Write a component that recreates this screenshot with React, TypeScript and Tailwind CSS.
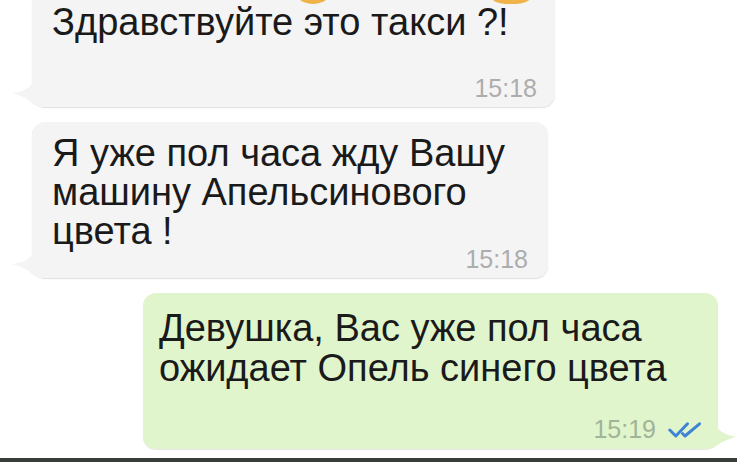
import React from "react";

const GrayTail = () => (
  <svg
    className="absolute left-[-21px] bottom-0"
    width="32"
    height="30"
    viewBox="0 0 32 30"
  >
    <path
      d="M22 4 C 20 11, 12 15, 1 16 C 9 18, 16 21, 21 26 C 23 28, 26 30, 32 30 L 32 4 Z"
      fill="#f4f4f4"
    />
  </svg>
);

const GreenTail = () => (
  <svg
    className="absolute right-[-19px] bottom-0"
    width="32"
    height="28"
    viewBox="0 0 32 28"
  >
    <path
      d="M10 2 C 12 9, 20 14, 31 16 C 23 18, 16 21, 11 25 C 9 27, 6 28, 0 28 L 0 2 Z"
      fill="#e1f5cc"
    />
  </svg>
);

const Checks = () => (
  <svg width="34" height="16" viewBox="0 0 34 16" className="ml-[12px] mb-[4px]">
    <path
      d="M1.8 8 L7.8 14 L19.5 1.8"
      fill="none"
      stroke="#3f84d4"
      strokeWidth="3"
      strokeLinecap="round"
      strokeLinejoin="round"
    />
    <path
      d="M14.5 11.5 L17 14 L31.5 1.8"
      fill="none"
      stroke="#3f84d4"
      strokeWidth="3"
      strokeLinecap="round"
      strokeLinejoin="round"
    />
  </svg>
);

export default function App() {
  return (
    <div className="w-[737px] h-[462px] bg-white overflow-hidden flex flex-col font-['Liberation_Sans',Arial,sans-serif] text-[#1a1a1a]">
      <div className="flex flex-col gap-[15px]">
        {/* Bubble 1 */}
        <div className="relative ml-[32px] w-[523px] -mt-[10px] bg-[#f4f4f4] rounded-[13px] shadow-[0_1px_1px_rgba(0,0,0,0.13)] pt-[13px] pb-[6px] pl-[20px] pr-[18px]">
          <span className="absolute left-[258px] top-[-34px] w-[46px] h-[48px] rounded-full bg-[#f0b34a]" />
          <span className="absolute left-[450px] top-[-34px] w-[58px] h-[48px] rounded-full bg-[#f0b34a]" />
          <div className="text-[38px] leading-[39px] relative">Здравствуйте это такси ?!</div>
          <div className="flex justify-end mt-[34px] text-[25px] leading-[25px] text-[#adadad]">15:18</div>
          <GrayTail />
        </div>

        {/* Bubble 2 */}
        <div className="relative ml-[32px] w-[516px] bg-[#f4f4f4] rounded-[13px] shadow-[0_1px_1px_rgba(0,0,0,0.13)] pt-[12px] pb-[6px] pl-[20px] pr-[20px]">
          <div className="text-[38px] leading-[39px]">
            <div>Я уже пол часа жду Вашу</div>
            <div>машину Апельсинового</div>
          </div>
          <div className="flex justify-between items-start">
            <div className="text-[38px] leading-[39px]">цвета !</div>
            <div className="mt-[35px] text-[25px] leading-[25px] text-[#adadad]">15:18</div>
          </div>
          <GrayTail />
        </div>

        {/* Bubble 3 */}
        <div className="relative ml-[143px] w-[575px] bg-[#e1f5cc] rounded-[13px] shadow-[0_1px_1px_rgba(0,0,0,0.1)] pt-[15px] pb-[7px] pl-[16px] pr-[16px]">
          <div className="text-[38px] leading-[40px]">
            <div>Девушка, Вас уже пол часа</div>
            <div>ожидает Опель синего цвета</div>
          </div>
          <div className="flex justify-end items-end mt-[29px] text-[25px] leading-[25px] text-[#a2b498]">
            <span>15:19</span>
            <Checks />
          </div>
          <GreenTail />
        </div>
      </div>
      <div className="mt-auto h-[4px] bg-[#3b3f3b]" />
    </div>
  );
}
